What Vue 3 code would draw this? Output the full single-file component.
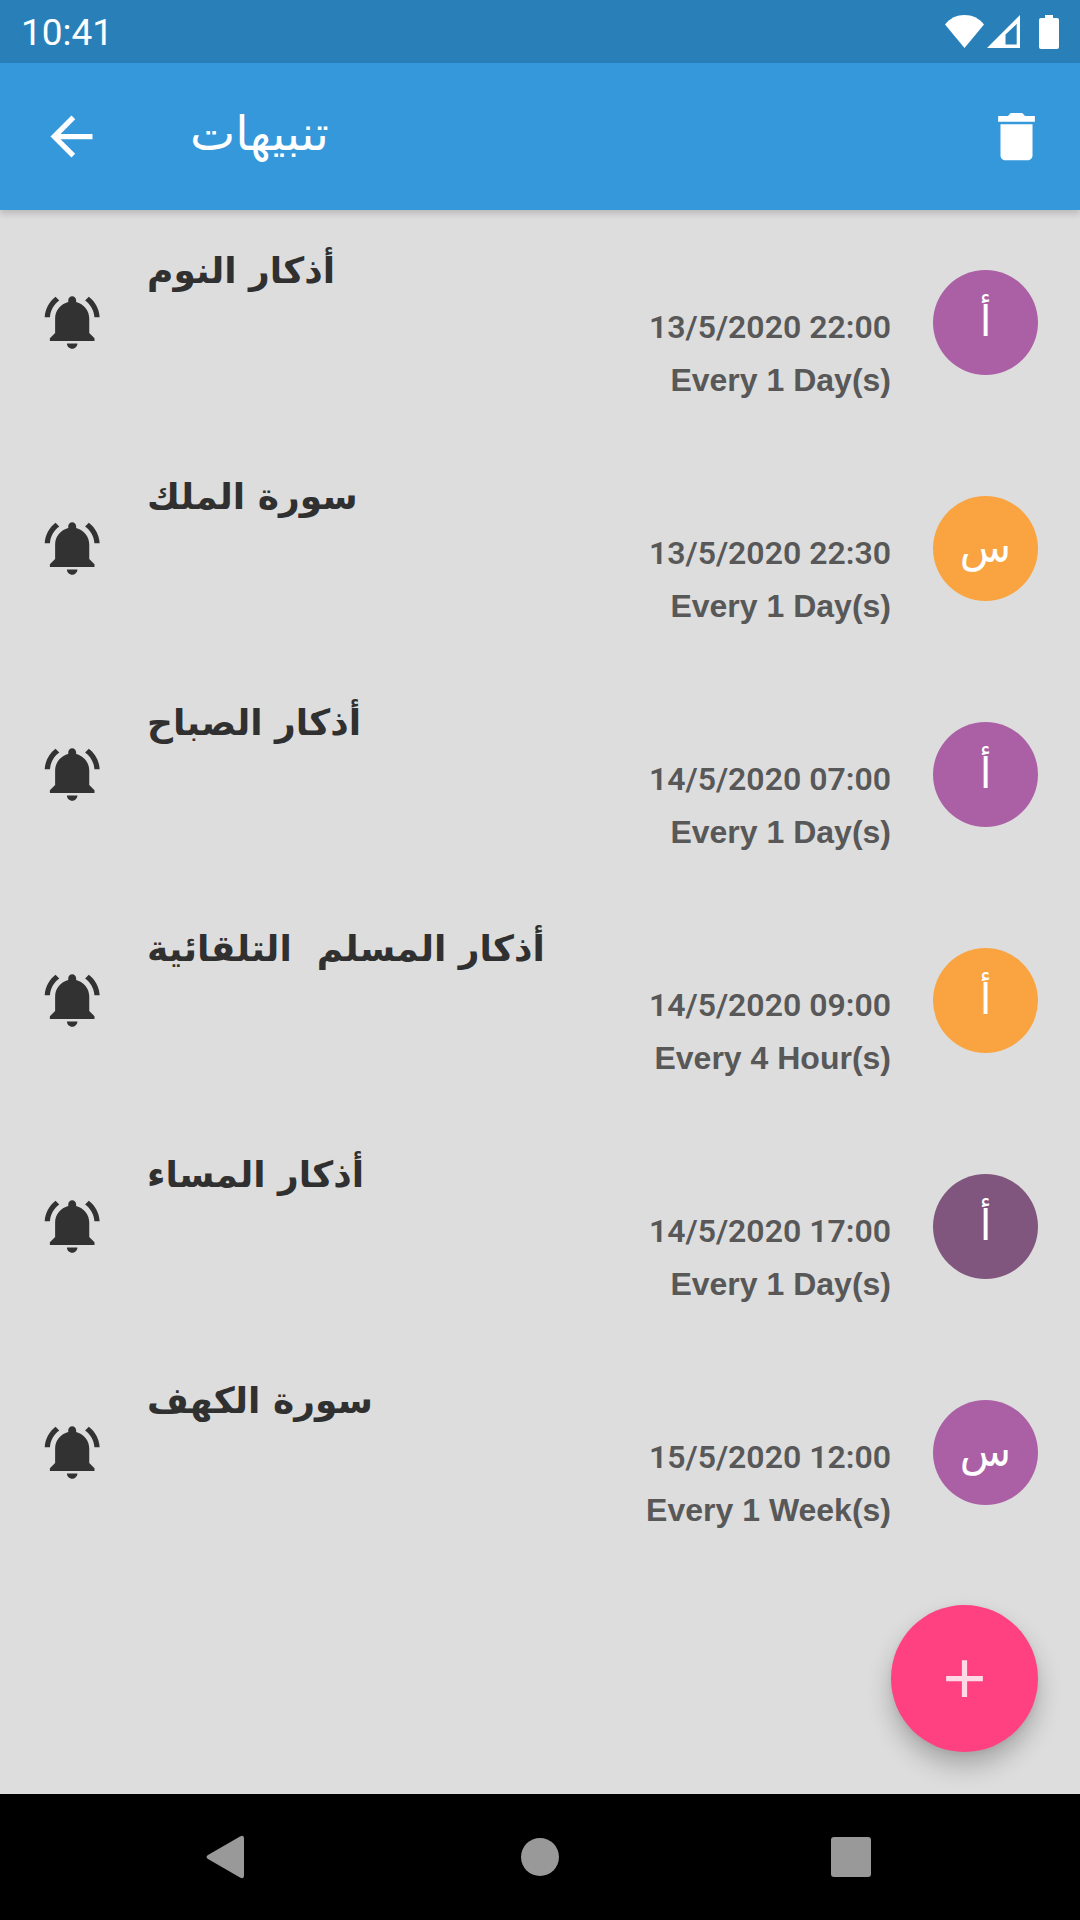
<template>
  <div class="screen">
    <div class="status-bar">
      <span class="clock">10:41</span>
      <svg class="status-icons" viewBox="0 0 114 34" aria-hidden="true">
        <path d="M0 9.500C5 3 12 0 19.500 0S34 3 39 9.500L19.500 33z" />
        <path fill-rule="evenodd" d="M42 33L75 0v33zM60.500 19.500V29.500H71.700V9z" />
        <path d="M100 0h8v3h4q2 0 2 2v27q0 2-2 2H96q-2 0-2-2V5q0-2 2-2h4z" />
      </svg>
    </div>

    <header class="app-bar">
      <button type="button" class="icon-button" aria-label="رجوع">
        <svg viewBox="0 0 24 24">
          <path d="M20 11H7.830l5.590-5.590L12 4l-8 8 8 8 1.410-1.410L7.830 13H20v-2z" />
        </svg>
      </button>
      <h1 dir="rtl">تنبيهات</h1>
      <button type="button" class="icon-button" aria-label="حذف">
        <svg viewBox="0 0 24 24">
          <path d="M5 4.200h3.600c.6-.2.700-1.200 1.600-1.200h3.600c.9 0 1 1 1.600 1.200H19v2.200H5zM5.900 7.300h12.200v11.900c0 1-.8 1.800-1.800 1.800H7.700c-1 0-1.800-.8-1.800-1.800z" />
        </svg>
      </button>
    </header>

    <main>
      <ul class="reminders">
        <li v-for="item in reminders" :key="item.id" class="reminder">
          <button type="button" class="icon-button bell" aria-label="تنبيه">
            <svg viewBox="0 0 24 24">
              <path d="M6.580 3.580L5.150 2.150C2.760 3.970 1.180 6.800 1.030 10h2c.15-2.650 1.510-4.970 3.550-6.420zM19.970 10h2c-.15-3.200-1.730-6.030-4.130-7.850l-1.420 1.430c2.030 1.450 3.400 3.770 3.550 6.420zm-1.970.5c0-3.070-2.130-5.640-5-6.320V3.500c0-.83-.67-1.500-1.500-1.500S10 2.670 10 3.500v.68c-2.870.68-5 3.250-5 6.320V16l-2 2v1h17v-1l-2-2v-5.500zM11.500 22c.14 0 .27-.01.4-.04.65-.13 1.190-.58 1.440-1.180.1-.24.16-.5.16-.78h-4c0 1.100.9 2 2 2z" />
            </svg>
          </button>
          <div class="details">
            <h2 dir="rtl">{{ item.title }}</h2>
            <p class="date">{{ item.date }}</p>
            <p class="repeat">{{ item.repeat }}</p>
          </div>
          <span :class="['avatar', item.color]">{{ item.title[0] }}</span>
        </li>
      </ul>
      <button type="button" class="fab" aria-label="إضافة">
        <svg viewBox="0 0 24 24"><path d="M19 13h-6v6h-2v-6H5v-2h6V5h2v6h6z" /></svg>
      </button>
    </main>

    <nav class="nav-bar">
      <button type="button" aria-label="Back">
        <svg viewBox="0 0 64 64"><path d="M11 30L43 11.500q4-2 4 2v37q0 4-4 2L11 34q-3-2 0-4z" /></svg>
      </button>
      <button type="button" aria-label="Home">
        <svg viewBox="0 0 64 64"><circle cx="32" cy="32" r="19" /></svg>
      </button>
      <button type="button" aria-label="Recents">
        <svg viewBox="0 0 64 64"><rect x="12" y="12" width="40" height="40" rx="3" /></svg>
      </button>
    </nav>
  </div>
</template>

<script setup>
import { ref } from 'vue'

const reminders = ref([
  { id: 1, title: 'أذكار النوم', date: '13/5/2020 22:00', repeat: 'Every 1 Day(s)', color: 'purple' },
  { id: 2, title: 'سورة الملك', date: '13/5/2020 22:30', repeat: 'Every 1 Day(s)', color: 'orange' },
  { id: 3, title: 'أذكار الصباح', date: '14/5/2020 07:00', repeat: 'Every 1 Day(s)', color: 'purple' },
  { id: 4, title: 'أذكار المسلم  التلقائية', date: '14/5/2020 09:00', repeat: 'Every 4 Hour(s)', color: 'orange' },
  { id: 5, title: 'أذكار المساء', date: '14/5/2020 17:00', repeat: 'Every 1 Day(s)', color: 'plum' },
  { id: 6, title: 'سورة الكهف', date: '15/5/2020 12:00', repeat: 'Every 1 Week(s)', color: 'purple' }
])
</script>

<style>
body {
  margin: 0;
  background: #ddd;
}
</style>

<style scoped>
.screen {
  display: flex;
  flex-direction: column;
  min-height: 100vh;
  background: #ddd;
  font-family: Roboto, "DejaVu Sans", sans-serif;
}

button {
  display: flex;
  align-items: center;
  justify-content: center;
  padding: 0;
  border: none;
  background: none;
  color: inherit;
  cursor: pointer;
}

svg {
  display: block;
  fill: currentColor;
}

.status-bar {
  display: flex;
  align-items: center;
  justify-content: space-between;
  height: 63px;
  padding: 0 21px;
  background: #2980b9;
  color: #fff;
}

.clock {
  padding-top: 3px;
  font-size: 37px;
  line-height: 60px;
}

.status-icons {
  width: 114px;
  height: 34px;
}

.app-bar {
  display: flex;
  align-items: center;
  height: 147px;
  padding: 0 32px 0 40px;
  background: #3498db;
  color: #fff;
  box-shadow: 0 4px 6px rgba(0, 0, 0, 0.15);
}

.icon-button {
  flex: none;
  width: 63px;
  height: 63px;
}

.icon-button svg {
  width: 63px;
  height: 63px;
}

h1 {
  margin: 0 auto 0 87px;
  padding-bottom: 6px;
  font-size: 48px;
  font-weight: 400;
  line-height: 60px;
}

main {
  position: relative;
  flex: 1;
}

.reminders {
  margin: 0;
  padding: 0;
  list-style: none;
}

.reminder {
  display: flex;
  align-items: center;
  gap: 42px;
  height: 224px;
  padding: 0 42px 2px;
}

.bell {
  color: #323232;
}

.details {
  display: flex;
  flex: 1;
  flex-direction: column;
  align-items: flex-end;
  padding-top: 4px;
}

h2 {
  align-self: flex-start;
  margin: 0;
  color: #303030;
  font-family: "DejaVu Sans", sans-serif;
  font-size: 36px;
  font-weight: 700;
  line-height: 60px;
  white-space: pre;
}

.date,
.repeat {
  margin: 0;
  color: #585858;
  font-family: "Liberation Sans", sans-serif;
  font-size: 32px;
  font-weight: 700;
  line-height: 53px;
}

.date {
  font-family: Roboto, sans-serif;
  font-weight: 600;
}

.avatar {
  display: flex;
  flex: none;
  align-items: center;
  justify-content: center;
  width: 105px;
  height: 105px;
  border-radius: 50%;
  color: #fff;
  font-family: "DejaVu Sans", sans-serif;
  font-size: 42px;
  line-height: 60px;
}

.purple {
  background: #ab60a5;
}

.orange {
  background: #f9a440;
}

.plum {
  background: #80567f;
}

.fab {
  position: absolute;
  right: 42px;
  bottom: 42px;
  width: 147px;
  height: 147px;
  border-radius: 50%;
  background: #ff4081;
  color: #ffd9e6;
  box-shadow: 0 14px 24px rgba(0, 0, 0, 0.24), 0 2px 6px rgba(0, 0, 0, 0.06);
}

.fab svg {
  width: 63px;
  height: 63px;
}

.nav-bar {
  display: grid;
  grid-template-columns: repeat(3, 1fr);
  height: 126px;
  padding: 0 73px;
  background: #000;
  color: #999;
}

.nav-bar svg {
  width: 64px;
  height: 64px;
}
</style>
